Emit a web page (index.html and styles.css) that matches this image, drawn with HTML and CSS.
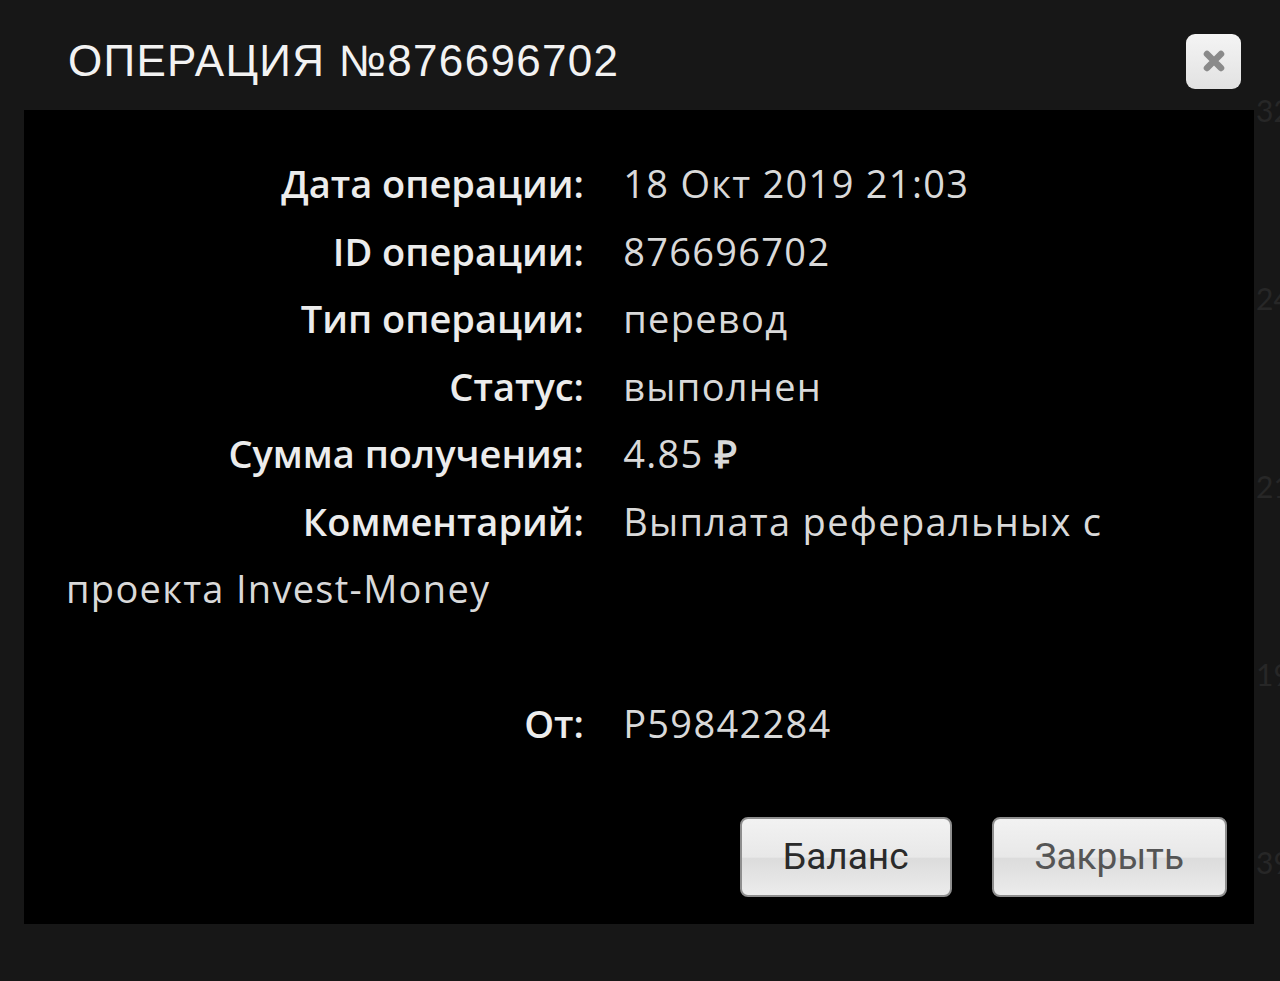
FILE: index.html
```html
<!DOCTYPE html>
<html lang="ru">
<head>
  <meta charset="UTF-8" />
  <meta name="viewport" content="width=device-width, initial-scale=1.0" />
  <title>Операция №876696702</title>
  <link rel="stylesheet" href="styles.css">
</head>
<body>

  <div class="page-behind">
    <div class="amount">32</div>
    <div class="amount">24</div>
    <div class="amount">21</div>
    <div class="amount">19</div>
    <div class="amount">39</div>
  </div>

  <div class="modal">
    <div class="modal-header">
      <h1>ОПЕРАЦИЯ №876696702</h1>
      <button class="close-x" aria-label="Закрыть">
        <svg width="26" height="26" viewBox="0 0 26 26">
          <path d="M6 6 L20 20 M20 6 L6 20" stroke="#8a8a8a" stroke-width="6.5" stroke-linecap="round" />
        </svg>
      </button>
    </div>

    <div class="modal-body">
      <div class="info">
        <div class="row"><span class="label">Дата операции:</span> 18 Окт 2019 21:03</div>
        <div class="row"><span class="label">ID операции:</span> 876696702</div>
        <div class="row"><span class="label">Тип операции:</span> перевод</div>
        <div class="row"><span class="label">Статус:</span> выполнен</div>
        <div class="row"><span class="label">Сумма получения:</span> 4.85 <b class="rub">₽</b></div>
        <div class="row"><span class="label">Комментарий:</span> Выплата реферальных с проекта Invest-Money</div>
        <div class="row empty"></div>
        <div class="row"><span class="label">От:</span> P59842284</div>
      </div>

      <div class="actions">
        <button class="btn btn-dark">Баланс</button>
        <button class="btn">Закрыть</button>
      </div>
    </div>
  </div>

</body>
</html>
```

FILE: styles.css
```css
body {
  margin: 0;
  background-color: #171717;
  font-family: 'Open Sans', sans-serif;
  color: #e6e6e6;
  overflow: hidden;
}

.page-behind {
  position: absolute;
  top: 92px;
  bottom: 0;
  left: 1256px;
  right: 0;
  overflow: hidden;
  font-family: 'Lato', sans-serif;
  font-size: 30px;
  color: #272727;
}

.amount {
  height: 188px;
}

.modal {
  position: relative;
}

.modal-header {
  height: 110px;
  box-sizing: border-box;
  padding: 12px 39px 0 68px;
  display: flex;
  align-items: center;
  justify-content: space-between;
}

.modal-header h1 {
  margin: 0;
  font-family: 'Liberation Sans', sans-serif;
  font-weight: normal;
  font-size: 44px;
  letter-spacing: 1.3px;
  color: #f2f2f2;
}

.close-x {
  width: 55px;
  height: 55px;
  border: none;
  border-radius: 9px;
  background: linear-gradient(#f4f4f4, #e2e2e2);
  display: flex;
  align-items: center;
  justify-content: center;
  padding: 0;
}

.modal-body {
  background-color: #000;
  margin: 0 26px 0 24px;
  height: 814px;
  padding: 40px 27px 0 42px;
  box-sizing: border-box;
}

.info {
  font-size: 38px;
  line-height: 67.5px;
  letter-spacing: 1.3px;
  color: #d9d9d9;
}

.row.empty {
  height: 67.5px;
}

.label {
  display: inline-block;
  width: 518px;
  margin-right: 28px;
  text-align: right;
  font-weight: 600;
  letter-spacing: 0;
  color: #ececec;
}

.rub {
  font-weight: 700;
}

.actions {
  display: flex;
  justify-content: flex-end;
  gap: 40px;
  margin-top: 59px;
}

.btn {
  height: 80px;
  padding: 0 41px;
  font-family: 'Roboto', sans-serif;
  font-size: 37px;
  color: #555;
  border: 2px solid #8e8e8e;
  border-radius: 8px;
  background: linear-gradient(#f2f2f2 0%, #e8e8e8 50%, #dcdcdc 52%, #ececec 100%);
}

.btn-dark {
  color: #2a2a2a;
}
```
